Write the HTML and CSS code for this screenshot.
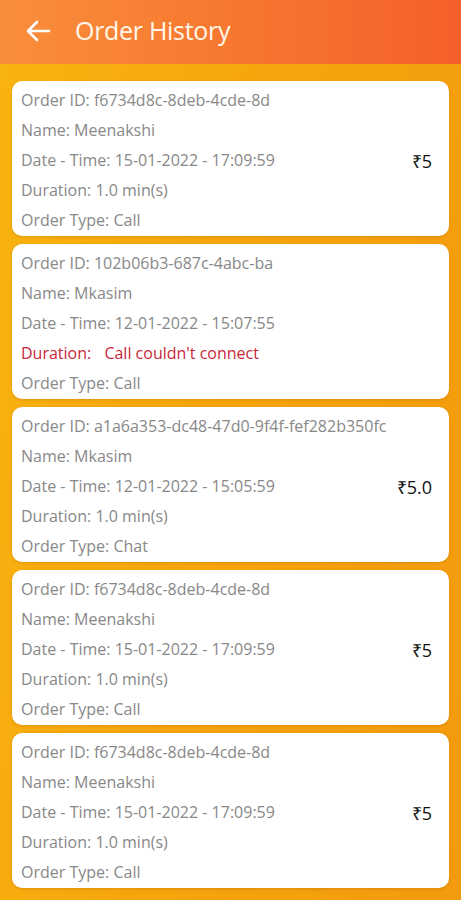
FILE: index.html
```html
<!DOCTYPE html>
<html lang="en">
<head>
  <meta charset="UTF-8">
  <title>Order History</title>
  <meta name="viewport" content="width=device-width, initial-scale=1.0">
  <link rel="stylesheet" href="styles.css">
</head>
<body>

  <header class="topbar">
    <svg class="voltar" width="26" height="22" viewBox="0 0 26 22">
      <path d="M24 11H3M12 2L3 11l9 9" fill="none" stroke="#fff" stroke-width="2.6" stroke-linecap="round" stroke-linejoin="round"/>
    </svg>
    <h1>Order History</h1>
  </header>

  <main class="lista">

    <div class="pedido">
      <div class="info">
        <p>Order ID: f6734d8c-8deb-4cde-8d</p>
        <p>Name: Meenakshi</p>
        <p>Date - Time: 15-01-2022 - 17:09:59</p>
        <p>Duration: 1.0 min(s)</p>
        <p>Order Type: Call</p>
      </div>
      <span class="valor">₹5</span>
    </div>

    <div class="pedido">
      <div class="info">
        <p>Order ID: 102b06b3-687c-4abc-ba</p>
        <p>Name: Mkasim</p>
        <p>Date - Time: 12-01-2022 - 15:07:55</p>
        <p class="erro">Duration: <span>Call couldn't connect</span></p>
        <p>Order Type: Call</p>
      </div>
    </div>

    <div class="pedido">
      <div class="info">
        <p>Order ID: a1a6a353-dc48-47d0-9f4f-fef282b350fc</p>
        <p>Name: Mkasim</p>
        <p>Date - Time: 12-01-2022 - 15:05:59</p>
        <p>Duration: 1.0 min(s)</p>
        <p>Order Type: Chat</p>
      </div>
      <span class="valor">₹5.0</span>
    </div>

    <div class="pedido">
      <div class="info">
        <p>Order ID: f6734d8c-8deb-4cde-8d</p>
        <p>Name: Meenakshi</p>
        <p>Date - Time: 15-01-2022 - 17:09:59</p>
        <p>Duration: 1.0 min(s)</p>
        <p>Order Type: Call</p>
      </div>
      <span class="valor">₹5</span>
    </div>

    <div class="pedido">
      <div class="info">
        <p>Order ID: f6734d8c-8deb-4cde-8d</p>
        <p>Name: Meenakshi</p>
        <p>Date - Time: 15-01-2022 - 17:09:59</p>
        <p>Duration: 1.0 min(s)</p>
        <p>Order Type: Call</p>
      </div>
      <span class="valor">₹5</span>
    </div>

  </main>

</body>
</html>
```

FILE: styles.css
```css
body {
  margin: 0;
  font-family: "Open Sans", "Liberation Sans", sans-serif;
  background: linear-gradient(100deg, #f8b410 0%, #f6a60c 45%, #f39a0e 100%);
  min-height: 900px;
}

.topbar {
  height: 64px;
  display: flex;
  align-items: center;
  padding-left: 25px;
  background: linear-gradient(90deg, #f98f3b 0%, #f7752f 55%, #f4602a 100%);
}

.voltar {
  margin-right: 24px;
  margin-top: -3px;
}

.topbar h1 {
  margin: 0 0 4px 0;
  font-size: 25px;
  font-weight: 400;
  letter-spacing: -0.3px;
  color: #fff7ea;
}

.lista {
  display: flex;
  flex-direction: column;
  gap: 8px;
  padding: 17px 12px 14px 12px;
}

.pedido {
  display: flex;
  align-items: center;
  justify-content: space-between;
  background-color: #fff;
  border-radius: 10px;
  padding: 4px 17px 1px 9px;
  box-shadow: 0 1px 3px rgba(150, 80, 0, 0.25);
}

.info p {
  margin: 0;
  font-size: 16px;
  line-height: 30px;
  color: #888;
  white-space: nowrap;
}

.info p.erro {
  color: #c8283a;
}

.erro span {
  margin-left: 9px;
}

.valor {
  font-size: 18px;
  color: #111;
  margin-top: 2px;
}
```
